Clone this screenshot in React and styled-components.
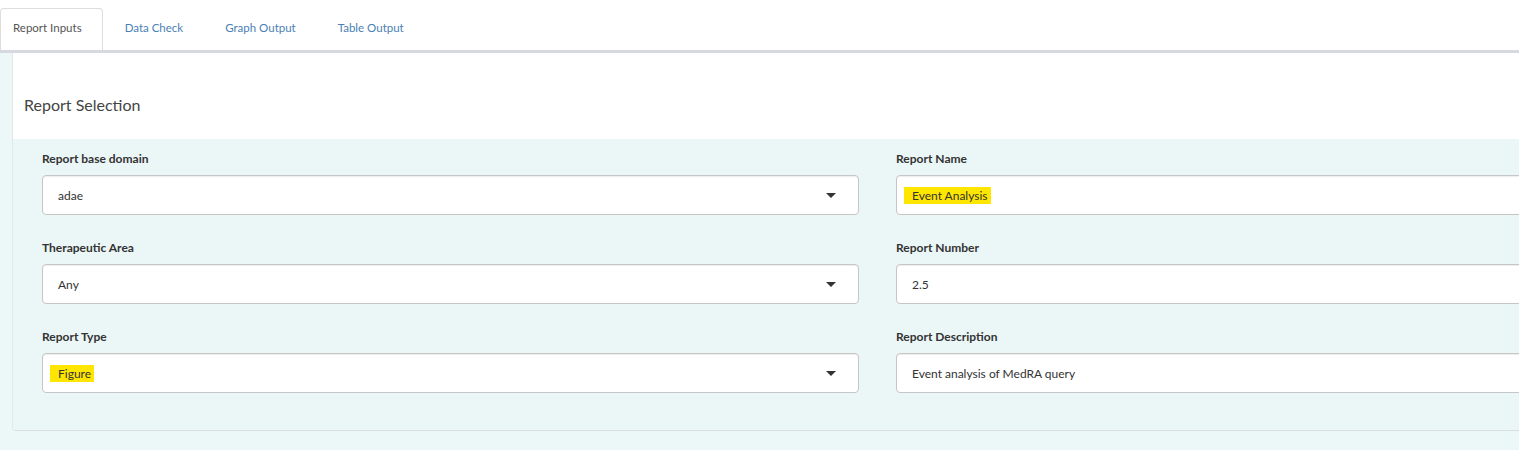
import React from "react";
import styled, { createGlobalStyle } from "styled-components";

const GlobalStyle = createGlobalStyle`
  html, body {
    margin: 0;
    padding: 0;
    overflow: hidden;
    background: #ecf7f7;
    font-family: "Lato", "Open Sans", "Liberation Sans", sans-serif;
  }
  * { box-sizing: border-box; }
`;

const Page = styled.div`
  width: 1519px;
  height: 450px;
  background: #ecf7f7;
  overflow: hidden;
`;

const TabBar = styled.nav`
  display: flex;
  align-items: flex-end;
  height: 53px;
  padding-top: 8px;
  background: #ffffff;
  border-bottom: 3px solid #d6d9df;
`;

const Tab = styled.div`
  display: flex;
  align-items: center;
  height: 42px;
  padding: 0 19px 5px 19px;
  margin-right: 2px;
  font-size: 11.5px;
  color: ${(p) => (p.$active ? "#555555" : "#4a7fb5")};
  background: ${(p) => (p.$active ? "#ffffff" : "transparent")};
  border: 1px solid ${(p) => (p.$active ? "#dddddd" : "transparent")};
  border-bottom: none;
  border-radius: 4px 4px 0 0;
  &:first-child {
    padding-left: 12px;
    padding-right: 20px;
  }
`;

const Content = styled.div`
  padding-left: 12px;
`;

const Card = styled.section`
  width: 1760px;
  border-bottom: 1px solid #d9dfdf;
  border-left: 1px solid #e2e8e8;
  border-radius: 0 0 4px 4px;
`;

const CardHeader = styled.header`
  display: flex;
  align-items: center;
  height: 86px;
  padding: 0 11px;
  padding-top: 16px;
  background: #ffffff;
`;

const Title = styled.h3`
  margin: 0;
  font-weight: 400;
  font-size: 16px;
  color: #444444;
`;

const CardBody = styled.div`
  display: grid;
  grid-template-columns: 817px 817px;
  column-gap: 37px;
  row-gap: 24px;
  padding: 11px 29px 37px 29px;
  background: #ebf6f7;
  border-radius: 0 0 4px 4px;
`;

const Field = styled.div`
  display: flex;
  flex-direction: column;
`;

const Label = styled.label`
  font-size: 12px;
  line-height: 17px;
  font-weight: 700;
  color: #333333;
  margin-bottom: 8px;
`;

const Box = styled.div`
  position: relative;
  display: flex;
  align-items: center;
  height: 40px;
  padding: 0 15px;
  background: #ffffff;
  border: 1px solid #c6c6c6;
  border-radius: 4px;
  box-shadow: inset 0 1px 1px rgba(0, 0, 0, 0.075);
  font-size: 12px;
  color: #333333;
`;

const Highlight = styled.span`
  background: #ffe600;
  padding: 1px 3px 1px 8px;
  margin-left: -8px;
`;

const Caret = styled.span`
  position: absolute;
  right: 22px;
  top: 50%;
  margin-top: -2px;
  width: 0;
  height: 0;
  border-left: 5px solid transparent;
  border-right: 5px solid transparent;
  border-top: 5px solid #333333;
`;

const fields = [
  { label: "Report base domain", value: "adae", select: true },
  { label: "Report Name", value: "Event Analysis", hl: true },
  { label: "Therapeutic Area", value: "Any", select: true },
  { label: "Report Number", value: "2.5" },
  { label: "Report Type", value: "Figure", select: true, hl: true },
  { label: "Report Description", value: "Event analysis of MedRA query" },
];

export default function App() {
  return (
    <Page>
      <GlobalStyle />
      <TabBar>
        <Tab $active>Report Inputs</Tab>
        <Tab>Data Check</Tab>
        <Tab>Graph Output</Tab>
        <Tab>Table Output</Tab>
      </TabBar>
      <Content>
        <Card>
          <CardHeader>
            <Title>Report Selection</Title>
          </CardHeader>
          <CardBody>
            {fields.map((f) => (
              <Field key={f.label}>
                <Label>{f.label}</Label>
                <Box>
                  {f.hl ? <Highlight>{f.value}</Highlight> : f.value}
                  {f.select && <Caret />}
                </Box>
              </Field>
            ))}
          </CardBody>
        </Card>
      </Content>
    </Page>
  );
}
